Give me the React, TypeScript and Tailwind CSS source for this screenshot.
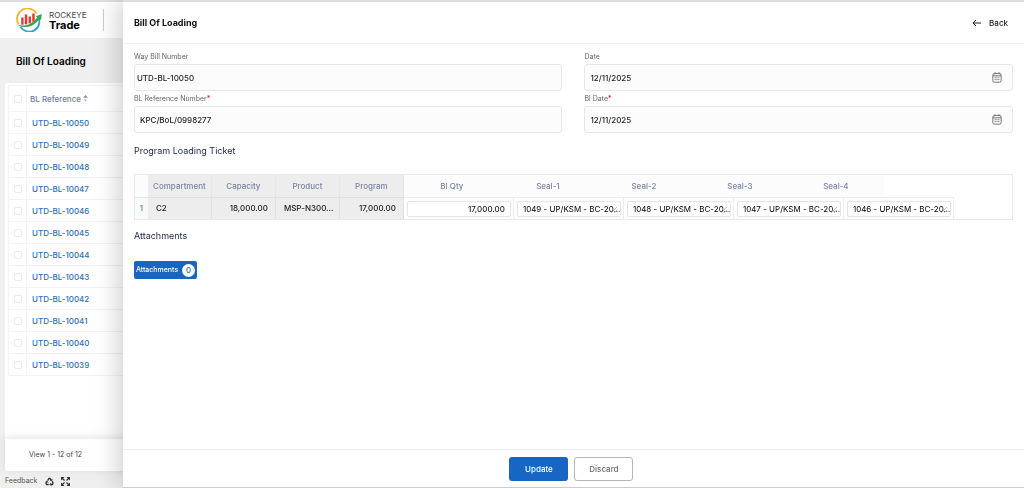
import { ReactNode } from "react";

type Seal = { id: number; value: string };

const references = [
  "UTD-BL-10050",
  "UTD-BL-10049",
  "UTD-BL-10048",
  "UTD-BL-10047",
  "UTD-BL-10046",
  "UTD-BL-10045",
  "UTD-BL-10044",
  "UTD-BL-10043",
  "UTD-BL-10042",
  "UTD-BL-10041",
  "UTD-BL-10040",
  "UTD-BL-10039",
];

const seals: Seal[] = [
  { id: 1, value: "1049 - UP/KSM - BC-20..." },
  { id: 2, value: "1048 - UP/KSM - BC-20..." },
  { id: 3, value: "1047 - UP/KSM - BC-20..." },
  { id: 4, value: "1046 - UP/KSM - BC-20..." },
];

function Logo() {
  return (
    <svg width="27" height="24" viewBox="0 0 27 24" fill="none" aria-hidden="true">
      <path d="M2.6 16.5A10 10 0 0 1 20.5 5.4" stroke="#f6b52c" strokeWidth="1.8" />
      <path d="M22 8.5A10 10 0 0 1 4.4 18.6" stroke="#2ba3dc" strokeWidth="1.8" />
      <path d="M5.2 9.5h2.4v7.2H5.2zM8.8 6.4h2.5v9.8H8.8zM12.6 8.4H15v7h-2.4zM16.2 5.4h2.5v8.4h-2.5z" fill="#e23b35" />
      <path d="M1 16.8c8 2.4 15.4-.6 20.3-7.3l-1.5-1.2 6-2.2-.8 6-1.5-1.1C18 18.8 9 21.4 1 16.8z" fill="#37a849" />
    </svg>
  );
}

function CalendarIcon() {
  return (
    <svg width="10" height="11" viewBox="0 0 10 11" fill="none" stroke="#555" strokeWidth="0.8" aria-hidden="true">
      <rect x="0.8" y="1.4" width="8.4" height="8.8" rx="1.8" />
      <path d="M1 3.800h8M3 .3v2M7 .3v2" />
      <path d="M2.600 5.700h4.800M2.600 7.600h4.800" strokeDasharray="1.2 .6" />
    </svg>
  );
}

function Field({ id, label, value, required, date, tight }: { id: string; label: string; value: string; required?: boolean; date?: boolean; tight?: boolean }) {
  return (
    <div>
      <label htmlFor={id} className="block h-[15px] text-[7px] leading-[15px] text-[#666]">
        {label}
        {required && <span className="text-red-600">*</span>}
      </label>
      <div className="flex h-[27px] items-center rounded-[3px] border border-[#e6e6ec] bg-[#fcfcfc] pr-2.5">
        <input
          id={id}
          defaultValue={value}
          className={`h-full min-w-0 flex-1 bg-transparent text-[8px] font-medium text-[#222] outline-none ${tight ? "pl-0.5" : "pl-[5px]"}`}
        />
        {date && (
          <button type="button" aria-label="Choose date">
            <CalendarIcon />
          </button>
        )}
      </div>
    </div>
  );
}

function SectionTitle({ children }: { children: ReactNode }) {
  return <h3 className="text-[9px] leading-4 text-[#1a2645]">{children}</h3>;
}

function TicketTable() {
  return (
    <table className="mt-[15px] block border border-[#e9e9e9] text-[8px] font-medium text-[#222]">
      <thead className="block">
        <tr className="flex h-[22px] items-stretch text-[#7c83a3]">
          <th className="w-[13px] bg-[#fcfcfc]" />
          {["Compartment", "Capacity", "Product", "Program"].map((h) => (
            <th key={h} className="w-16 border-r border-[#e6e6e6] bg-[#ededed] leading-[22px] font-medium">{h}</th>
          ))}
          {["Bl Qty", "Seal-1", "Seal-2", "Seal-3", "Seal-4"].map((h) => (
            <th key={h} className="w-24 bg-[#fcfcfc] leading-[22px] font-medium">{h}</th>
          ))}
        </tr>
      </thead>
      <tbody className="block">
        <tr className="flex h-[22px]">
          <td className="w-[13px] border-t border-[#e4e4e4] bg-[#fafafa] text-center leading-[21px] text-[#3b7fc4]">1</td>
          <td className="w-16 border-t border-r border-[#e0e0e0] bg-[#ededed] pl-2 leading-[21px]">C2</td>
          <td className="w-16 border-t border-r border-[#e0e0e0] bg-[#ededed] pr-[7px] text-right leading-[21px]">18,000.00</td>
          <td className="w-16 border-t border-r border-[#e0e0e0] bg-[#ededed] pl-2 leading-[21px]">MSP-N300...</td>
          <td className="w-16 border-t border-r border-[#e0e0e0] bg-[#ededed] pr-[7px] text-right leading-[21px]">17,000.00</td>
          <td className="flex w-[110px] items-center border-t border-r border-[#ededed] pr-0.5 pl-[3px]">
            <input aria-label="Bl Qty" defaultValue="17,000.00" className="h-4 w-full rounded-[2px] border border-[#e4e4ee] bg-white pr-[5px] text-right" />
          </td>
          {seals.map((s) => (
            <td key={s.id} className="relative flex w-[110px] items-center border-t border-r border-[#ededed] pr-0.5 pl-[3px]">
              <input aria-label={`Seal-${s.id}`} defaultValue={s.value} className="h-4 w-full rounded-[2px] border border-[#e4e4ee] bg-white pl-[5px] font-normal text-black" />
              <svg className="absolute right-1.5 bottom-1.5" width="6" height="6" viewBox="0 0 6 6" stroke="#999" strokeWidth="0.6" aria-hidden="true">
                <path d="M0 6 6 0M3 6 6 3" />
              </svg>
            </td>
          ))}
        </tr>
      </tbody>
    </table>
  );
}

function ListPage() {
  return (
    <div className="flex min-h-screen flex-col border-t-2 border-[#dedede] bg-[#efefef]">
      <header className="flex h-9 items-center bg-white pl-4">
        <Logo />
        <div className="ml-1.5 text-black">
          <div className="text-[8px] leading-[9px] text-[#444]">ROCKEYE</div>
          <div className="text-[11px] leading-[10px] font-bold">Trade</div>
        </div>
        <div className="ml-4 h-[22px] w-px bg-[#ccc]" />
      </header>
      <h1 className="pt-[15px] pb-3.5 pl-4 text-[10px] leading-4 font-semibold text-black">Bill Of Loading</h1>
      <main className="ml-[5px] flex flex-1 flex-col rounded-tl-[3px] rounded-bl-[3px] bg-white">
        <div className="flex-1 pt-0.5 pl-[3px]">
          <table className="w-full border-l border-[#f3f3f3] text-left text-[8px]">
            <thead>
              <tr className="h-[26px] border-t border-b border-[#f3f3f3]">
                <th className="w-[18px] border-r border-[#f3f3f3]">
                  <input type="checkbox" aria-label="Select all" className="mx-auto block size-2 appearance-none rounded-[2px] border border-[#ebebeb] bg-white" />
                </th>
                <th className="pl-[3px] font-medium text-[#7179a0]">
                  <span className="inline-flex items-center gap-0.5">
                    BL Reference
                    <svg width="5" height="7" viewBox="0 0 5 7" fill="#8a8fa8" aria-hidden="true">
                      <path d="M2.500 0 5 2.800H0zM1 4.500h3L2.500 6z" />
                    </svg>
                  </span>
                </th>
              </tr>
            </thead>
            <tbody>
              {references.map((ref) => (
                <tr key={ref} className="h-[22px] border-b border-[#f3f3f3]">
                  <td className="border-r border-[#f3f3f3]">
                    <input type="checkbox" aria-label={`Select ${ref}`} className="mx-auto block size-2 appearance-none rounded-[2px] border border-[#ebebeb] bg-white" />
                  </td>
                  <td className="pl-[5px]">
                    <a href="#" className="font-medium text-[#2a6fc0]">{ref}</a>
                  </td>
                </tr>
              ))}
            </tbody>
          </table>
        </div>
        <div className="rounded-bl-[3px] py-2 pl-6 text-[7px] leading-4 text-[#444] shadow-[0_-2px_8px_rgba(0,0,0,0.1)]">View 1 - 12 of 12</div>
      </main>
      <footer className="flex h-[17px] items-center pt-1 pl-[5px] text-[7px] text-[#555]">
        <a href="#">Feedback</a>
        <button type="button" aria-label="Recycle" className="ml-2">
          <svg width="9" height="9" viewBox="0 0 24 24" fill="none" stroke="#333" strokeWidth="3.6" aria-hidden="true">
            <path d="M7 9.500 10.500 4h3l3 5M19 11l2.500 5-1.700 4H14M10 20H4.200L2.500 16 5 12" />
            <path d="m13 8 5 2 1-5M16 16l-3 4 3 3M2 12l4-1 2 4" strokeWidth="2.4" />
          </svg>
        </button>
        <button type="button" aria-label="Full screen" className="ml-[7px]">
          <svg width="9" height="9" viewBox="0 0 9 9" fill="#333" stroke="#333" strokeWidth="1.2" aria-hidden="true">
            <path d="M0 0h3.500L0 3.500zM9 0v3.500L5.500 0zM0 9V5.500L3.500 9zM9 9H5.500L9 5.500z" stroke="none" />
            <path d="M1 1l2.500 2.500M8 1 5.500 3.500M1 8l2.500-2.500M8 8 5.500 5.500" />
          </svg>
        </button>
      </footer>
    </div>
  );
}

function LoadingDrawer() {
  return (
    <section className="fixed inset-y-0 right-0 flex w-[88%] flex-col border-t-2 border-b border-t-[#dedede] border-b-[#ccc] bg-white shadow-[-4px_0_24px_rgba(0,0,0,0.2)]">
      <header className="flex h-[42px] items-center justify-between border-b border-[#f2f2f2] pr-4 pl-[11px]">
        <h2 className="text-[9px] font-bold text-[#111]">Bill Of Loading</h2>
        <button type="button" className="flex items-center gap-2 text-[8px] font-medium text-[#222]">
          <svg width="9" height="8" viewBox="0 0 9 8" fill="none" stroke="#222" aria-hidden="true">
            <path d="M9 4H1M4 1 1 4l3 3" />
          </svg>
          Back
        </button>
      </header>
      <form className="flex flex-1 flex-col" onSubmit={(e) => e.preventDefault()}>
        <div className="flex-1 px-[11px] pt-[5px]">
          <div className="grid grid-cols-2 gap-x-[22px]">
            <Field id="way-bill" label="Way Bill Number" value="UTD-BL-10050" tight />
            <Field id="date" label="Date" value="12/11/2025" date />
            <Field id="bl-ref" label="BL Reference Number" value="KPC/BoL/0998277" required />
            <Field id="bl-date" label="Bl Date" value="12/11/2025" required date />
          </div>
          <div className="mt-2.5">
            <SectionTitle>Program Loading Ticket</SectionTitle>
          </div>
          <TicketTable />
          <div className="mt-2">
            <SectionTitle>Attachments</SectionTitle>
          </div>
          <button type="button" className="mt-[17px] flex h-[18px] items-center gap-1 rounded-[2px] bg-[#1866c4] pr-0.5 pl-0.5 text-[7px] font-medium text-white">
            Attachments
            <span className="flex size-[13px] items-center justify-center rounded-full bg-white text-[8px] text-[#1866c4]">0</span>
          </button>
        </div>
        <div className="flex h-[38px] items-center justify-center gap-1.5 border-t border-[#f2f2f2] pr-1 text-[8px] font-medium">
          <button type="submit" className="h-6 w-[59px] rounded-[3px] bg-[#1866c4] text-white">Update</button>
          <button type="button" className="h-6 w-[59px] rounded-[3px] border border-[#b5b5b5] bg-white text-[#666]">Discard</button>
        </div>
      </form>
    </section>
  );
}

export default function App() {
  return (
    <div className="font-['Inter',sans-serif]">
      <ListPage />
      <LoadingDrawer />
    </div>
  );
}
